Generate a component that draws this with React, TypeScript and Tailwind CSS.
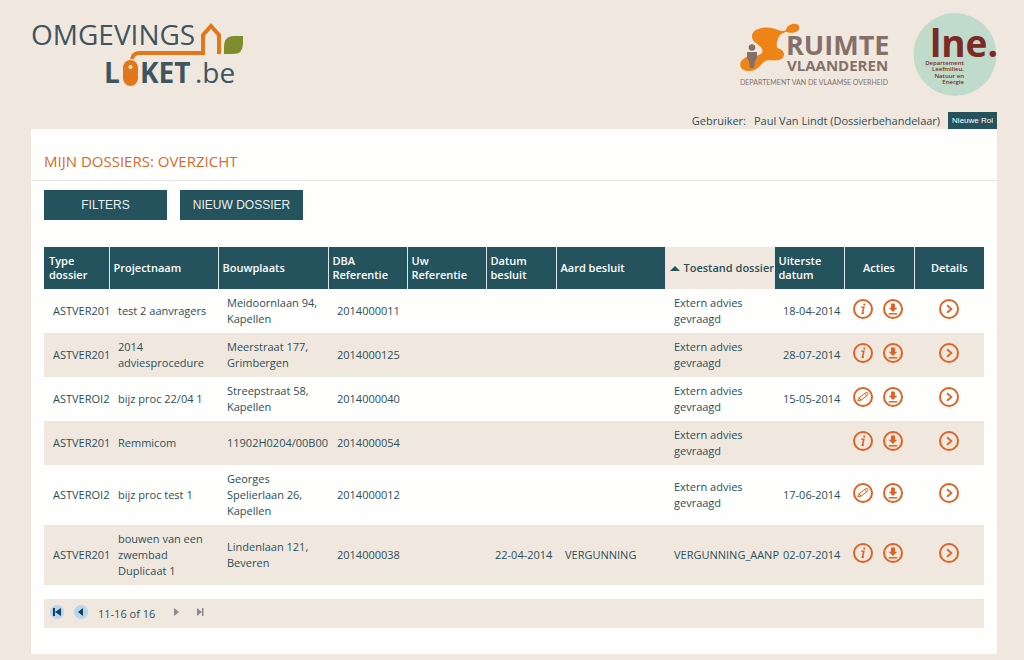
type Dossier = {
  type: string
  project: string
  place: string
  dba: string
  decisionDate?: string
  decision?: string
  status: string
  deadline: string
  action: 'info' | 'edit'
}

const dossiers: Dossier[] = [
  { type: 'ASTVER201', project: 'test 2 aanvragers', place: 'Meidoornlaan 94, Kapellen', dba: '2014000011', status: 'Extern advies gevraagd', deadline: '18-04-2014', action: 'info' },
  { type: 'ASTVER201', project: '2014 adviesprocedure', place: 'Meerstraat 177, Grimbergen', dba: '2014000125', status: 'Extern advies gevraagd', deadline: '28-07-2014', action: 'info' },
  { type: 'ASTVEROI2', project: 'bijz proc 22/04 1', place: 'Streepstraat 58, Kapellen', dba: '2014000040', status: 'Extern advies gevraagd', deadline: '15-05-2014', action: 'edit' },
  { type: 'ASTVER201', project: 'Remmicom', place: '11902H0204/00B00', dba: '2014000054', status: 'Extern advies gevraagd', deadline: '', action: 'info' },
  { type: 'ASTVEROI2', project: 'bijz proc test 1', place: 'Georges Spelierlaan 26, Kapellen', dba: '2014000012', status: 'Extern advies gevraagd', deadline: '17-06-2014', action: 'edit' },
  { type: 'ASTVER201', project: 'bouwen van een zwembad Duplicaat 1', place: 'Lindenlaan 121, Beveren', dba: '2014000038', decisionDate: '22-04-2014', decision: 'VERGUNNING', status: 'VERGUNNING_AANP', deadline: '02-07-2014', action: 'info' },
]

const columns = [
  { label: 'Type dossier', width: 'w-[65px]' },
  { label: 'Projectnaam', width: 'w-[109px]' },
  { label: 'Bouwplaats', width: 'w-[110px]' },
  { label: 'DBA Referentie', width: 'w-[79px]' },
  { label: 'Uw Referentie', width: 'w-[79px]' },
  { label: 'Datum besluit', width: 'w-[70px]' },
  { label: 'Aard besluit', width: 'w-[109px]' },
  { label: 'Toestand dossier', width: 'w-[109px]', sorted: true },
  { label: 'Uiterste datum', width: 'w-[70px]' },
  { label: 'Acties', width: 'w-[70px]', center: true },
  { label: 'Details', width: 'w-[70px]', center: true },
]

function OmgevingsloketLogo() {
  return (
    <svg
      width="216"
      height="68"
      viewBox="0 0 216 68"
      role="img"
      aria-label="Omgevingsloket.be"
      className="overflow-visible"
    >
      <g fill="#3f5560" fontFamily="'Open Sans', sans-serif" fontSize="28">
        <text x="0" y="21">OMGEVINGS</text>
        <text x="73" y="59" fontWeight="700">L</text>
        <text x="109" y="59" fontWeight="700">KET</text>
        <text x="164" y="59">.be</text>
      </g>
      <path d="M101 35q1-6 8-6h63V11l8-9 8 9v19" fill="none" stroke="#e2761b" strokeWidth="4" />
      <rect x="92" y="36" width="15" height="26" rx="7.5" fill="#e2761b" />
      <circle cx="99.5" cy="43" r="2" fill="#f8e4cf" />
      <path d="M193 30v-7q0-11 10-11h9v8q0 10-10 10z" fill="#7f8d2e" />
    </svg>
  )
}

function RuimteVlaanderenLogo() {
  return (
    <svg
      width="149"
      height="68"
      viewBox="0 0 149 68"
      role="img"
      aria-label="Ruimte Vlaanderen"
      className="overflow-visible"
    >
      <path
        transform="translate(-4 -9) scale(.3333)"
        d="M48 62C48 42 80 36 100 38C125 40 130 52 150 46C152 24 188 20 190 36C192 52 165 58 152 50C138 54 128 60 126 72C120 90 120 98 132 102C150 108 148 134 125 136C105 138 95 132 82 142C65 160 60 168 38 168C15 168 10 152 14 142C20 126 40 122 60 122C78 120 84 108 76 98C66 84 48 84 48 62z"
        fill="#ee8418"
      />
      <circle cx="12" cy="23.5" r="3.3" fill="#857069" />
      <path d="M7 28h10v6l-2 3-1 7h-4l-1-7-2-3z" fill="#857069" />
      <g fill="#857069" fontFamily="'Open Sans', sans-serif" fontWeight="700">
        <text x="46" y="31" fontSize="27">RUIMTE</text>
        <text x="47" y="47" fontSize="15">VLAANDEREN</text>
      </g>
      <text x="0" y="61" fontSize="7" fill="#857069" fontFamily="Lato, sans-serif">
        DEPARTEMENT VAN DE VLAAMSE OVERHEID
      </text>
    </svg>
  )
}

function LneLogo() {
  return (
    <svg
      width="84"
      height="84"
      viewBox="0 0 84 84"
      role="img"
      aria-label="Departement Leefmilieu, Natuur en Energie"
      className="overflow-visible"
    >
      <circle cx="42" cy="42.5" r="41.5" fill="#c0dacb" />
      <text x="17" y="45" fontSize="37" fontWeight="700" fill="#7b2a25" fontFamily="'Open Sans', sans-serif">
        lne.
      </text>
      <g fill="#7b2a25" fontSize="6" fontWeight="600" fontFamily="'Open Sans', sans-serif" textAnchor="end">
        <text x="51" y="53">Departement</text>
        <text x="51" y="59">Leefmilieu,</text>
        <text x="51" y="66">Natuur en</text>
        <text x="51" y="72">Energie</text>
      </g>
    </svg>
  )
}

function RoundIcon({ name }: { name: 'info' | 'edit' | 'download' | 'details' }) {
  return (
    <svg width="20" height="20" viewBox="0 0 20 20" fill="none" stroke="#dd6426" className="block">
      <circle cx="10" cy="10" r="9" strokeWidth="2" />
      {name === 'info' && (
        <>
          <path d="M8.3 8.3h2.5L9.4 14.3h1.6" strokeWidth="1.6" />
          <circle cx="11.3" cy="5.6" r="1.1" fill="#dd6426" stroke="none" />
        </>
      )}
      {name === 'edit' && (
        <path d="M4.8 13.6l1.2-3 6.8-4.9q1.3-.7 2 .4t-.2 2.1L8 13.2zM6 10.6l2 2.6M11.8 6.4l1.8 2.6" strokeWidth="1" />
      )}
      {name === 'download' && (
        <>
          <path d="M8 4.5h4v4.2h2.3L10 13 5.7 8.7H8z" fill="#dd6426" stroke="none" />
          <path d="M5.8 14.8h8.4" strokeWidth="1.5" />
        </>
      )}
      {name === 'details' && <path d="M8 6.2l4.4 3.8L8 13.8" strokeWidth="1.8" />}
    </svg>
  )
}

function PagerButton({ label, path, active }: { label: string; path: string; active?: boolean }) {
  return (
    <button type="button" aria-label={label} disabled={!active}>
      <svg width="14" height="14" viewBox="0 0 14 14" className="block">
        {active && <circle cx="7" cy="7" r="7" fill="#b9d6ea" />}
        <path d={path} fill={active ? '#123f66' : '#8a8a8a'} />
      </svg>
    </button>
  )
}

function DossierRow({ dossier }: { dossier: Dossier }) {
  return (
    <tr className="even:bg-[#f0e8de]">
      <td className="py-1.5 pl-[9px] whitespace-nowrap">{dossier.type}</td>
      <td className="py-1.5 pl-[9px]">{dossier.project}</td>
      <td className="py-1.5 pl-[9px]">{dossier.place}</td>
      <td className="py-1.5 pl-[9px]">{dossier.dba}</td>
      <td />
      <td className="py-1.5 pl-[9px] whitespace-nowrap">{dossier.decisionDate}</td>
      <td className="py-1.5 pl-[9px]">{dossier.decision}</td>
      <td className="py-1.5 pr-5 pl-[9px]">{dossier.status}</td>
      <td className="py-1.5 pl-[9px] whitespace-nowrap">{dossier.deadline}</td>
      <td className="pb-1 pl-[9px]">
        <div className="flex gap-2.5">
          <button type="button" aria-label={dossier.action === 'info' ? 'Informatie' : 'Bewerken'}>
            <RoundIcon name={dossier.action} />
          </button>
          <button type="button" aria-label="Downloaden">
            <RoundIcon name="download" />
          </button>
        </div>
      </td>
      <td className="pb-1">
        <a href="#details" aria-label="Details" className="mx-auto block w-5">
          <RoundIcon name="details" />
        </a>
      </td>
    </tr>
  )
}

export default function App() {
  return (
    <div className="min-h-screen bg-[#f0e8de] pr-[27px] pb-1.5 pl-[31px] font-['Open_Sans','Noto_Sans',sans-serif] text-[11px] leading-4 text-[#2c4f59]">
      <header>
        <div className="flex h-28 items-start justify-between pt-3">
          <a href="#home" className="pt-3">
            <OmgevingsloketLogo />
          </a>
          <div className="flex gap-6">
            <div className="pt-3">
              <RuimteVlaanderenLogo />
            </div>
            <LneLogo />
          </div>
        </div>
        <div className="flex items-center justify-end gap-2">
          <span>Gebruiker:</span>
          <span>Paul Van Lindt (Dossierbehandelaar)</span>
          <button type="button" className="h-[17px] bg-[#24535e] px-1 font-['Liberation_Sans',sans-serif] text-[8px] text-white">
            Nieuwe Rol
          </button>
        </div>
      </header>

      <main className="bg-[#fefefd] pb-[26px]">
        <h1 className="border-b border-[#e6e6e4] px-[13px] pt-5 pb-[7px] text-[15px] leading-6 text-[#d9692b]">
          MIJN DOSSIERS: OVERZICHT
        </h1>
        <div className="px-[13px] pt-[9px]">
          <div className="flex gap-[13px] font-['Liberation_Sans',sans-serif] text-xs text-[#e9f0f0]">
            <button type="button" className="h-[30px] w-[123px] bg-[#24535e]">
              FILTERS
            </button>
            <button type="button" className="h-[30px] w-[123px] bg-[#24535e]">
              NIEUW DOSSIER
            </button>
          </div>

          <table className="mt-[27px] w-full table-fixed text-left font-medium">
            <thead>
              <tr className="bg-[#24535e] text-white">
                {columns.map((col) => (
                  <th
                    key={col.label}
                    aria-sort={col.sorted ? 'ascending' : undefined}
                    className={`${col.width} h-[42px] overflow-hidden border-l border-[#dfe8e8] px-1 leading-[14px] font-semibold first:border-l-0 first:pl-[5px] ${
                      col.center ? 'text-center' : ''
                    } ${col.sorted ? 'bg-[#f0e8de] whitespace-nowrap text-[#2c4f59]' : ''}`}
                  >
                    {col.sorted ? (
                      <span className="flex items-center gap-1">
                        <svg width="10" height="5" viewBox="0 0 10 5" className="shrink-0">
                          <path d="M0 5l5-5 5 5z" fill="#24535e" />
                        </svg>
                        {col.label}
                      </span>
                    ) : (
                      col.label
                    )}
                  </th>
                ))}
              </tr>
            </thead>
            <tbody>
              {dossiers.map((dossier) => (
                <DossierRow key={dossier.dba} dossier={dossier} />
              ))}
            </tbody>
          </table>

          <nav aria-label="Paginering" className="mt-3.5 flex h-[29px] items-center gap-2.5 bg-[#f0e8de] px-1.5 pb-1">
            <PagerButton label="Eerste pagina" path="M3 3h2v8H3zM11 3v8L5 7z" active />
            <PagerButton label="Vorige pagina" path="M9 3v8L4 7z" active />
            <span className="pt-1 pr-1 font-medium">11-16 of 16</span>
            <PagerButton label="Volgende pagina" path="M5 3l5 4-5 4z" />
            <PagerButton label="Laatste pagina" path="M4 3l5 4-5 4zM9 3h1.5v8H9z" />
          </nav>
        </div>
      </main>
    </div>
  )
}
